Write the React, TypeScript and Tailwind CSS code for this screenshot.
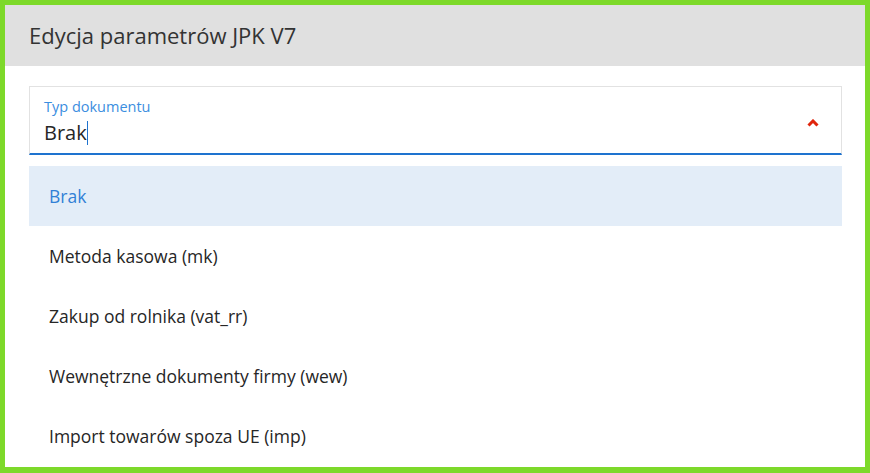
const options = [
  'Brak',
  'Metoda kasowa (mk)',
  'Zakup od rolnika (vat_rr)',
  'Wewnętrzne dokumenty firmy (wew)',
  'Import towarów spoza UE (imp)',
]

export default function App() {
  return (
    <div
      className="w-[870px] h-[473px] overflow-hidden border-[5px] border-b-[6px] border-[#7dd92a] bg-white text-[#262626]"
      style={{ fontFamily: '"Open Sans", "Noto Sans", sans-serif' }}
    >
      <div className="h-[61px] bg-[#e0e0e0] flex items-center px-6">
        <h1 className="text-[22px] text-[#333]">Edycja parametrów JPK V7</h1>
      </div>
      <div className="pl-6 pr-[23px] pt-5">
        <div className="h-[69px] border border-[#e2e2e2] border-b-2 border-b-[#1e73cf] flex items-start pl-[14px] pr-[22px]">
          <div className="flex-1 flex flex-col pt-[10.5px]">
            <span className="text-[14.5px] leading-[18px] text-[#3b8ee0]">Typ dokumentu</span>
            <div className="flex items-center h-[28px] mt-[3.5px]">
              <span className="text-[20px] leading-[28px]">Brak</span>
              <span className="w-px h-[24px] bg-[#1e73cf]" />
            </div>
          </div>
          <svg width="12" height="8" viewBox="0 0 12 8" className="mt-[32px]">
            <path d="M1.5 6.5 L6 2 L10.5 6.5" fill="none" stroke="#e0250c" strokeWidth="3" />
          </svg>
        </div>
        <ul className="mt-[11px]">
          {options.map((o, i) => (
            <li
              key={o}
              className={`h-[60px] flex items-center px-5 text-[17.5px] ${i === 0 ? 'bg-[#e3edf8] text-[#3180d6]' : ''}`}
            >
              {o}
            </li>
          ))}
        </ul>
      </div>
    </div>
  )
}
